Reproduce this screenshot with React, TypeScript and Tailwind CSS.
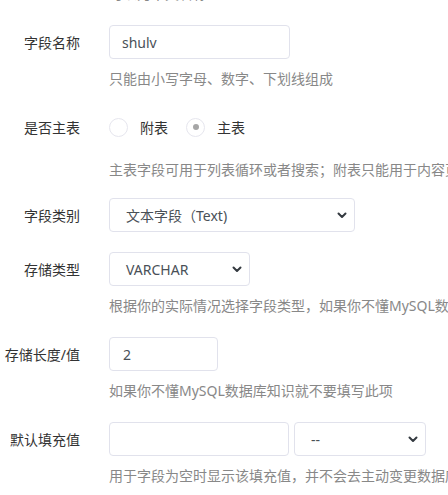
import React from "react"

const font = "font-['Noto_Sans','Noto_Sans_CJK_SC',sans-serif]"
const fieldBox =
  "h-[34px] rounded-[4px] border border-[#e1e2ec] bg-white text-[14px] text-[#495057] outline-none"

function Chevron() {
  return (
    <svg
      className="pointer-events-none absolute right-[8px] top-1/2 -translate-y-1/2"
      width="10"
      height="8"
      viewBox="0 0 10 8"
    >
      <path d="M1.5 2.5 L5 6 L8.5 2.5" fill="none" stroke="#343a40" strokeWidth="2" strokeLinecap="round" strokeLinejoin="round" />
    </svg>
  )
}

function Select({ value, width }: { value: string; width: string }) {
  return (
    <div className={"relative " + width}>
      <div className={fieldBox + " flex items-center pl-[16px] w-full"}>{value}</div>
      <Chevron />
    </div>
  )
}

function Label({ text }: { text: string }) {
  return <div className="w-[80px] shrink-0 text-right text-[#333] whitespace-nowrap">{text}</div>
}

function Help({ text, className = "" }: { text: string; className?: string }) {
  return (
    <div className={"pl-[109px] h-5 leading-5 text-[#888] whitespace-nowrap " + className}>{text}</div>
  )
}

function Radio({ checked, label }: { checked?: boolean; label: string }) {
  return (
    <label className="flex items-center gap-[12px]">
      <span className="flex h-[19px] w-[19px] items-center justify-center rounded-full border border-[#e6e6ee] bg-white">
        {checked && <span className="h-[6px] w-[6px] rounded-full bg-[#a6a6a6]" />}
      </span>
      <span className="text-[#333]">{label}</span>
    </label>
  )
}

export default function App() {
  return (
    <div className={"w-[448px] h-[495px] overflow-hidden bg-white text-[14px] " + font}>
      <Help text="可以为中文名称" className="-mt-[16px]" />

      <div className="mt-[21px] flex items-center gap-[29px]">
        <Label text="字段名称" />
        <div className={fieldBox + " w-[181px] flex items-center pl-[12px] bg-[#eef0f5]"}>shulv</div>
      </div>
      <Help text="只能由小写字母、数字、下划线组成" className="mt-[10px]" />

      <div className="mt-[21px] flex h-[34px] items-center gap-[29px]">
        <Label text="是否主表" />
        <div className="flex items-center gap-[18px]">
          <Radio label="附表" />
          <Radio checked label="主表" />
        </div>
      </div>
      <Help text="主表字段可用于列表循环或者搜索；附表只能用于内容页调用" className="mt-[16px]" />

      <div className="mt-[18px] flex items-center gap-[29px]">
        <Label text="字段类别" />
        <Select value="文本字段（Text)" width="w-[246px]" />
      </div>

      <div className="mt-[20px] flex items-center gap-[29px]">
        <Label text="存储类型" />
        <Select value="VARCHAR" width="w-[141px]" />
      </div>
      <Help text="根据你的实际情况选择字段类型，如果你不懂MySQL数据库知识请保持默认" className="mt-[10px]" />

      <div className="mt-[21px] flex items-center gap-[29px]">
        <Label text="存储长度/值" />
        <div className={fieldBox + " w-[109px] flex items-center pl-[13px]"}>2</div>
      </div>
      <Help text="如果你不懂MySQL数据库知识就不要填写此项" className="mt-[10px]" />

      <div className="mt-[21px] flex items-center gap-[29px]">
        <Label text="默认填充值" />
        <div className="flex items-center gap-[5px]">
          <div className={fieldBox + " w-[180px]"} />
          <Select value="--" width="w-[132px]" />
        </div>
      </div>
      <Help text="用于字段为空时显示该填充值，并不会去主动变更数据库中的值" className="mt-[10px]" />
    </div>
  )
}
